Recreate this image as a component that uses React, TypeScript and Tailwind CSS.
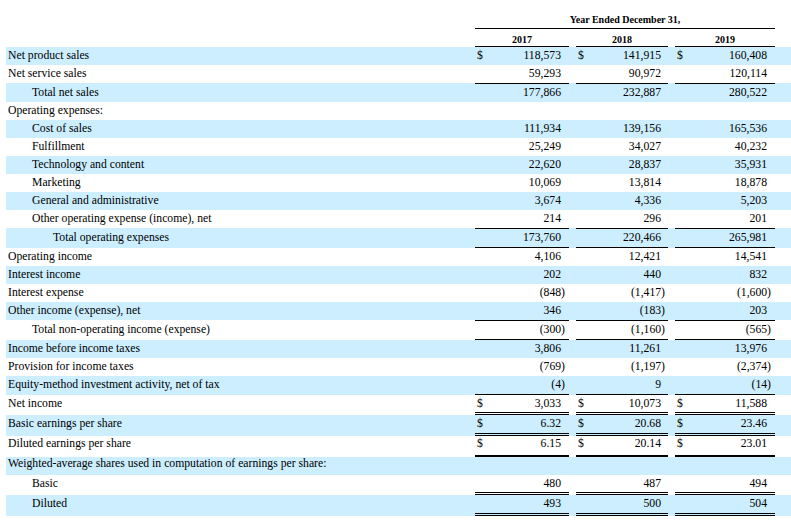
import React from "react";

type BKey = "none" | "t" | "b" | "y" | "bd" | "b2";

type Row = {
  label: string;
  indent?: 0 | 1 | 2;
  vals?: [string, string, string];
  dollar?: boolean;
  border?: BKey;
  blue: boolean;
  h?: string;
  pad?: string;
};

const CELL_B: Record<BKey, string> = {
  none: "",
  t: "border-t border-black",
  b: "border-b border-black",
  y: "border-y border-black",
  bd: "border-b-[3px] border-double border-black",
  b2: "border-b-2 border-black",
};

const LABEL_B: Record<BKey, string> = {
  none: "",
  t: "border-t border-transparent",
  b: "border-b border-transparent",
  y: "border-y border-transparent",
  bd: "border-b-[3px] border-double border-transparent",
  b2: "border-b-2 border-transparent",
};

const ROW_H: Record<BKey, string> = {
  none: "h-[18px]",
  t: "h-[19px]",
  b: "h-[19px]",
  y: "h-[20px]",
  bd: "h-[21px]",
  b2: "h-[21px]",
};

const INDENT = ["pl-[2px]", "pl-[26px]", "pl-[47px]"];

const rows: Row[] = [
  { label: "Net product sales", vals: ["118,573", "141,915", "160,408"], dollar: true, blue: true },
  { label: "Net service sales", vals: ["59,293", "90,972", "120,114"], blue: false },
  { label: "Total net sales", indent: 1, vals: ["177,866", "232,887", "280,522"], border: "t", blue: true },
  { label: "Operating expenses:", blue: false },
  { label: "Cost of sales", indent: 1, vals: ["111,934", "139,156", "165,536"], blue: true },
  { label: "Fulfillment", indent: 1, vals: ["25,249", "34,027", "40,232"], blue: false },
  { label: "Technology and content", indent: 1, vals: ["22,620", "28,837", "35,931"], blue: true },
  { label: "Marketing", indent: 1, vals: ["10,069", "13,814", "18,878"], blue: false },
  { label: "General and administrative", indent: 1, vals: ["3,674", "4,336", "5,203"], blue: true },
  { label: "Other operating expense (income), net", indent: 1, vals: ["214", "296", "201"], blue: false },
  { label: "Total operating expenses", indent: 2, vals: ["173,760", "220,466", "265,981"], border: "y", blue: true },
  { label: "Operating income", vals: ["4,106", "12,421", "14,541"], blue: false },
  { label: "Interest income", vals: ["202", "440", "832"], blue: true },
  { label: "Interest expense", vals: ["(848)", "(1,417)", "(1,600)"], blue: false },
  { label: "Other income (expense), net", vals: ["346", "(183)", "203"], blue: true },
  { label: "Total non-operating income (expense)", indent: 1, vals: ["(300)", "(1,160)", "(565)"], border: "y", blue: false },
  { label: "Income before income taxes", vals: ["3,806", "11,261", "13,976"], blue: true },
  { label: "Provision for income taxes", vals: ["(769)", "(1,197)", "(2,374)"], blue: false },
  { label: "Equity-method investment activity, net of tax", vals: ["(4)", "9", "(14)"], border: "b", blue: true },
  { label: "Net income", vals: ["3,033", "10,073", "11,588"], dollar: true, border: "bd", blue: false, h: "h-[20px]" },
  { label: "Basic earnings per share", vals: ["6.32", "20.68", "23.46"], dollar: true, border: "bd", blue: true, pad: "pb-px" },
  { label: "Diluted earnings per share", vals: ["6.15", "20.14", "23.01"], dollar: true, border: "b2", blue: false, pad: "pb-[4px]" },
  { label: "Weighted-average shares used in computation of earnings per share:", blue: true, pad: "pb-[4px]" },
  { label: "Basic", indent: 1, vals: ["480", "487", "494"], border: "bd", blue: false, h: "h-[20px]" },
  { label: "Diluted", indent: 1, vals: ["493", "500", "504"], border: "bd", blue: true },
];

const COL_W = ["w-[94px]", "w-[92px]", "w-[100px]"];
const COL_PR = ["pr-[8px]", "pr-[7px]", "pr-[8px]"];

function Num({ v }: { v: string }) {
  if (v.endsWith(")")) {
    return <span className="mr-[-4px]">{v}</span>;
  }
  return <span>{v}</span>;
}

export default function App() {
  return (
    <div
      className="w-[791px] h-[527px] bg-white text-black pl-[6px] text-[11.7px]"
      style={{ fontFamily: '"Liberation Serif", "Times New Roman", serif' }}
    >
      {/* header */}
      <div className="flex">
        <div className="w-[469px]" />
        <div className="w-[300px] h-[29px] border-b border-black flex items-end justify-center pb-[2px] font-bold text-[10px] leading-[12px]">
          Year Ended December 31,
        </div>
      </div>
      <div className="flex h-[18px]">
        <div className="w-[469px]" />
        {["2017", "2018", "2019"].map((y, i) => (
          <React.Fragment key={y}>
            {i > 0 && <div className="w-[7px]" />}
            <div
              className={`${COL_W[i]} border-b border-black flex items-end justify-center font-bold text-[10px] leading-[12px]`}
            >
              {y}
            </div>
          </React.Fragment>
        ))}
      </div>
      {rows.map((r, idx) => {
        const b = r.border ?? "none";
        const h = r.h ?? ROW_H[b];
        const pad = r.pad ?? "";
        return (
          <div key={idx} className={`flex ${h} ${r.blue ? "bg-[#cceeff]" : ""}`}>
            <div
              className={`w-[469px] flex items-center whitespace-nowrap leading-[14px] ${INDENT[r.indent ?? 0]} ${LABEL_B[b]} ${pad}`}
            >
              {r.label}
            </div>
            {r.vals &&
              r.vals.map((v, i) => (
                <React.Fragment key={i}>
                  {i > 0 && <div className="w-[7px]" />}
                  <div
                    className={`${COL_W[i]} flex items-center justify-between pl-[2px] ${COL_PR[i]} leading-[14px] ${CELL_B[b]} ${pad}`}
                  >
                    <span>{r.dollar ? "$" : ""}</span>
                    <Num v={v} />
                  </div>
                </React.Fragment>
              ))}
          </div>
        );
      })}
    </div>
  );
}
